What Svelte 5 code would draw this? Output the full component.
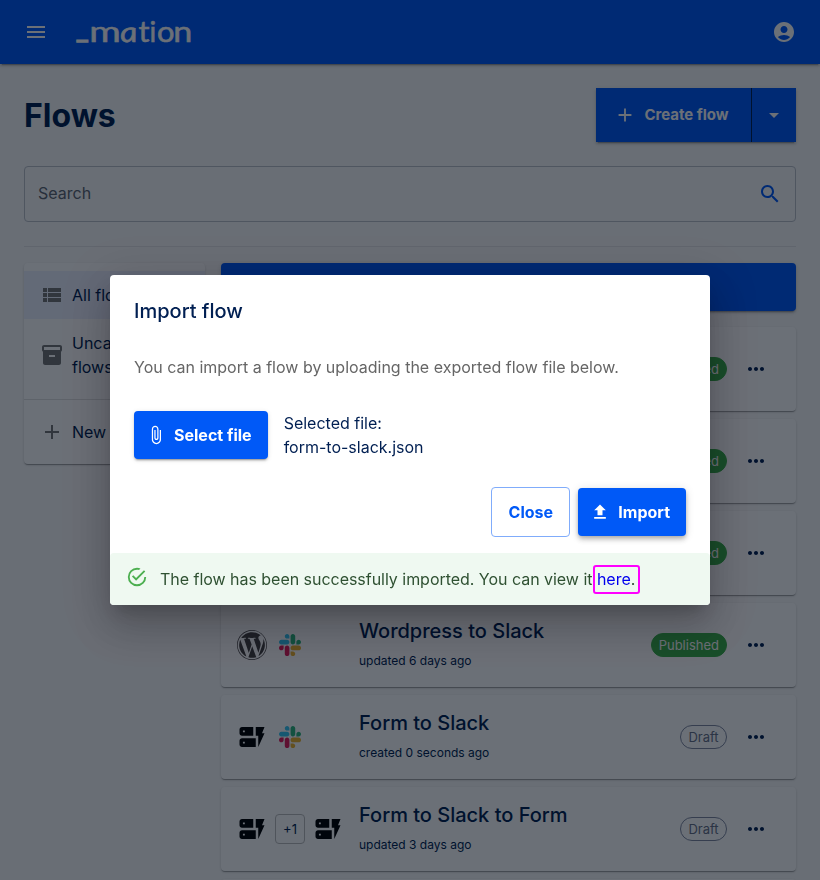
<script>
const icons = {
	menu: "M3 18h18v-2H3v2zm0-5h18v-2H3v2zm0-7v2h18V6H3z",
	account: "M12 2C6.48 2 2 6.48 2 12s4.48 10 10 10 10-4.48 10-10S17.52 2 12 2zm0 4c1.93 0 3.5 1.57 3.5 3.5S13.93 13 12 13s-3.5-1.57-3.5-3.5S10.07 6 12 6zm0 14c-2.03 0-4.43-.82-6.14-2.88C7.55 15.8 9.68 15 12 15s4.45.8 6.14 2.12C16.43 19.18 14.03 20 12 20z",
	add: "M19 13h-6v6h-2v-6H5v-2h6V5h2v6h6v2z",
	dropDown: "m7 10 5 5 5-5z",
	search: "M15.5 14h-.79l-.28-.27C15.41 12.59 16 11.11 16 9.5 16 5.91 13.09 3 9.5 3S3 5.91 3 9.5 5.91 16 9.5 16c1.61 0 3.09-.59 4.23-1.57l.27.28v.79l5 4.99L20.49 19l-4.99-5zm-6 0C7.01 14 5 11.99 5 9.5S7.01 5 9.5 5 14 7.01 14 9.5 11.99 14 9.5 14z",
	list: "M3 14h4v-4H3v4zm0 5h4v-4H3v4zM3 9h4V5H3v4zm5 5h13v-4H8v4zm0 5h13v-4H8v4zM8 5v4h13V5H8z",
	archive: "M20 2H4c-1 0-2 .9-2 2v3.01c0 .72.43 1.34 1 1.69V20c0 1.1 1.1 2 2 2h14c.9 0 2-.9 2-2V8.7c.57-.35 1-.97 1-1.69V4c0-1.1-1-2-2-2zm-5 12H9v-2h6v2zm5-7H4V4l16-.02V7z",
	more: "M6 10c-1.1 0-2 .9-2 2s.9 2 2 2 2-.9 2-2-.9-2-2-2zm12 0c-1.1 0-2 .9-2 2s.9 2 2 2 2-.9 2-2-.9-2-2-2zm-6 0c-1.1 0-2 .9-2 2s.9 2 2 2 2-.9 2-2-.9-2-2-2z",
	attach: "M16.5 6v11.5c0 2.21-1.79 4-4 4s-4-1.79-4-4V5c0-1.38 1.12-2.5 2.5-2.5s2.5 1.12 2.5 2.5v10.5c0 .55-.45 1-1 1s-1-.45-1-1V6H10v9.5c0 1.38 1.12 2.5 2.5 2.5s2.5-1.12 2.5-2.5V5c0-2.21-1.79-4-4-4S7 2.79 7 5v12.5c0 3.04 2.46 5.5 5.5 5.5s5.5-2.46 5.5-5.5V6h-1.5z",
	upload: "M5 20h14v-2H5v2zm0-10h4v6h6v-6h4l-7-7-7 7z",
	success: "M20,12A8,8 0 0,1 12,20A8,8 0 0,1 4,12A8,8 0 0,1 12,4C12.76,4 13.5,4.11 14.2, 4.31L15.77,2.74C14.61,2.26 13.34,2 12,2A10,10 0 0,0 2,12A10,10 0 0,0 12,22A10,10 0 0,0 22,12M7.91,10.08L6.5,11.5L11,16L21,6L19.59,4.58L11,13.17L7.91,10.08Z",
	form: "M17 20v-9h-2V4h7l-2 5h2l-5 11zm-2-7v7H4c-1.1 0-2-.9-2-2v-3c0-1.1.9-2 2-2h11zm-8.75 2.75h-1.5v1.5h1.5v-1.5zM13 4v7H4c-1.1 0-2-.9-2-2V6c0-1.1.9-2 2-2h9zM6.25 6.75h-1.5v1.5h1.5v-1.5z"
};

const flows = [
	{ apps: [], title: "", info: "", published: true },
	{ apps: [], title: "", info: "", published: true },
	{ apps: [], title: "", info: "", published: true },
	{ apps: ["wordpress", "slack"], title: "Wordpress to Slack", info: "updated 6 days ago", published: true },
	{ apps: ["form", "slack"], title: "Form to Slack", info: "created 0 seconds ago", published: false },
	{ apps: ["form", "+1", "form"], title: "Form to Slack to Form", info: "updated 3 days ago", published: false }
];

// letter, x, y and drawn width
const logo = [
	["_", 0, 21.5, 12.5],
	["m", 13.2, 26, 31.5],
	["a", 45, 26, 17.5],
	["t", 62.5, 26, 11],
	["i", 73.5, 26, 6.7],
	["o", 81, 26, 17.5],
	["n", 97.2, 26, 19]
];
</script>

{#snippet icon(name, size = 24)}
	<svg class="icon" width={size} height={size} viewBox="0 0 24 24"><path d={icons[name]} /></svg>
{/snippet}

{#snippet app(name)}
	{#if name === "wordpress"}
		<svg class="app wordpress" viewBox="0 0 122.52 122.523">
			<path d="M8.708 61.26c0 20.802 12.089 38.779 29.619 47.298L13.258 39.872a52.354 52.354 0 0 0-4.55 21.388z" />
			<path d="M96.74 58.608c0-6.495-2.333-10.993-4.334-14.494-2.664-4.329-5.161-7.995-5.161-12.324 0-4.831 3.664-9.328 8.825-9.328.233 0 .454.029.681.042-9.35-8.566-21.807-13.796-35.489-13.796-18.36 0-34.513 9.42-43.91 23.688 1.233.037 2.395.063 3.382.063 5.497 0 14.006-.667 14.006-.667 2.833-.167 3.167 3.994.337 4.329 0 0-2.847.335-6.015.501L48.2 93.547l11.501-34.493-8.188-22.434c-2.83-.166-5.511-.501-5.511-.501-2.832-.166-2.5-4.496.332-4.329 0 0 8.679.667 13.843.667 5.496 0 14.006-.667 14.006-.667 2.835-.167 3.168 3.994.337 4.329 0 0-2.853.335-6.015.501l18.992 56.494 5.242-17.517c2.272-7.269 4.001-12.49 4.001-16.989z" />
			<path d="M62.184 65.857l-15.768 45.819a52.552 52.552 0 0 0 14.846 2.141c6.12 0 11.989-1.058 17.452-2.979a4.615 4.615 0 0 1-.374-.724z" />
			<path d="M107.376 36.046c.226 1.674.354 3.471.354 5.404 0 5.333-.996 11.328-3.996 18.824l-16.053 46.413c15.624-9.111 26.133-26.038 26.133-45.426.001-9.137-2.333-17.729-6.438-25.215z" />
			<path d="M61.262 0C27.483 0 0 27.481 0 61.26c0 33.783 27.483 61.263 61.262 61.263 33.778 0 61.265-27.48 61.265-61.263C122.526 27.481 95.04 0 61.262 0zm0 119.715c-32.23 0-58.453-26.223-58.453-58.455 0-32.23 26.222-58.451 58.453-58.451 32.229 0 58.45 26.221 58.45 58.451 0 32.232-26.221 58.455-58.45 58.455z" />
		</svg>
	{:else if name === "slack"}
		<svg class="app slack" viewBox="0 0 122.8 122.8">
			<path fill="#e01e5a" d="M25.8 77.6c0 7.1-5.8 12.9-12.9 12.9S0 84.7 0 77.6s5.8-12.9 12.9-12.9h12.9v12.9zm6.5 0c0-7.1 5.8-12.9 12.9-12.9s12.9 5.8 12.9 12.9v32.3c0 7.1-5.8 12.9-12.9 12.9s-12.9-5.8-12.9-12.9V77.6z" />
			<path fill="#36c5f0" d="M45.2 25.8c-7.1 0-12.9-5.8-12.9-12.9S38.1 0 45.2 0s12.9 5.8 12.9 12.9v12.9H45.2zm0 6.5c7.1 0 12.9 5.8 12.9 12.9s-5.8 12.9-12.9 12.9H12.9C5.8 58.1 0 52.3 0 45.2s5.8-12.9 12.9-12.9h32.3z" />
			<path fill="#2eb67d" d="M97 45.2c0-7.1 5.8-12.9 12.9-12.9s12.9 5.8 12.9 12.9-5.8 12.9-12.9 12.9H97V45.2zm-6.5 0c0 7.1-5.8 12.9-12.9 12.9s-12.9-5.8-12.9-12.9V12.9C64.7 5.8 70.5 0 77.6 0s12.9 5.8 12.9 12.9v32.3z" />
			<path fill="#ecb22e" d="M77.6 97c7.1 0 12.9 5.8 12.9 12.9s-5.8 12.9-12.9 12.9-12.9-5.8-12.9-12.9V97h12.9zm0-6.5c-7.1 0-12.9-5.8-12.9-12.9s5.8-12.9 12.9-12.9h32.3c7.1 0 12.9 5.8 12.9 12.9s-5.8 12.9-12.9 12.9H77.6z" />
		</svg>
	{:else if name === "form"}
		<span class="app">{@render icon("form", 30)}</span>
	{:else}
		<span class="app count">{name}</span>
	{/if}
{/snippet}

<div class="page">
	<header>
		{@render icon("menu")}
		<svg class="logo" width="118" height="32" viewBox="0 0 118 32">
			{#each logo as [letter, x, y, width]}
				<text
					class:bar={letter === "_"}
					class:round={letter === "a"}
					transform="translate({x} {y}) skewX({letter === 'a' ? 8 : 0})"
					textLength={width}
					lengthAdjust="spacingAndGlyphs">{letter}</text>
			{/each}
		</svg>
		{@render icon("account")}
	</header>

	<main>
		<div class="heading">
			<h1>Flows</h1>
			<div class="group">
				<button class="create">{@render icon("add", 22)}Create flow</button>
				<button class="split" aria-label="More">{@render icon("dropDown")}</button>
			</div>
		</div>

		<div class="search">
			<span>Search</span>
			{@render icon("search")}
		</div>

		<hr />

		<div class="columns">
			<nav>
				<ul>
					<li class="selected">{@render icon("list")}<span>All flows</span></li>
					<li>{@render icon("archive")}<span>Uncategorized flows</span></li>
				</ul>
				<ul>
					<li>{@render icon("add")}<span>New folder</span></li>
				</ul>
			</nav>

			<section>
				<div class="banner"></div>
				{#each flows as flow}
					<article>
						<div class="apps">
							{#each flow.apps as name}
								{@render app(name)}
							{/each}
						</div>
						<div class="info">
							<h2>{flow.title}</h2>
							<p>{flow.info}</p>
						</div>
						<span class="chip" class:published={flow.published}>{flow.published ? "Published" : "Draft"}</span>
						<span class="more">{@render icon("more")}</span>
					</article>
				{/each}
				<article></article>
			</section>
		</div>
	</main>
</div>

<div class="backdrop">
	<div class="dialog" role="dialog">
		<h3>Import flow</h3>
		<div class="content">
			<p>You can import a flow by uploading the exported flow file below.</p>
			<div class="file">
				<button class="contained">{@render icon("attach", 20)}Select file</button>
				<div>Selected file:<br />form-to-slack.json</div>
			</div>
		</div>
		<div class="actions">
			<button class="outlined">Close</button>
			<button class="contained raised">{@render icon("upload", 20)}Import</button>
		</div>
		<div class="alert">
			{@render icon("success", 22)}
			<div>The flow has been successfully imported. You can view it <span class="link"><a href="#flow">here</a>.</span></div>
		</div>
	</div>
</div>

<style>
	:global(body) {
		margin: 0;
		overflow: hidden;
		background: #fafafa;
	}

	.page, .backdrop {
		font: 400 16px/24px Inter, "Liberation Sans", sans-serif;
		color: #001f52;
	}

	.page {
		height: 880px;
		overflow: hidden;
	}

	h1, h2, h3, p, ul {
		margin: 0;
		padding: 0;
	}

	.icon {
		display: block;
		flex: none;
		fill: currentColor;
	}

	button {
		display: flex;
		align-items: center;
		justify-content: center;
		box-sizing: border-box;
		border: 0;
		font: 700 16px/28px Inter, "Liberation Sans", sans-serif;
		color: #fff;
		background: #0059f7;
	}

	header {
		display: flex;
		align-items: center;
		height: 64px;
		box-sizing: border-box;
		padding: 0 24px;
		color: #fff;
		background: #0059f7;
		box-shadow: 0 3px 1px -2px rgba(0,0,0,0.2), 0 2px 2px rgba(0,0,0,0.14), 0 1px 5px rgba(0,0,0,0.12);
	}

	.logo {
		overflow: visible;
		margin: 0 auto 0 28px;
		fill: #fff;
		stroke: #fff;
		stroke-width: 0.5px;
		font: 400 28px Lato, sans-serif;
	}

	.logo .bar {
		stroke-width: 1.5px;
	}

	.logo .round {
		font-style: italic;
	}

	main {
		padding: 24px;
	}

	.heading {
		display: flex;
		justify-content: space-between;
		align-items: center;
		height: 54px;
		margin-bottom: 24px;
	}

	h1 {
		padding-top: 2px;
		font-size: 32px;
		line-height: 40px;
		font-weight: 700;
	}

	.group {
		display: flex;
		height: 54px;
		box-shadow: 0 3px 1px -2px rgba(0,0,0,0.2), 0 2px 2px rgba(0,0,0,0.14), 0 1px 5px rgba(0,0,0,0.12);
	}

	.create {
		width: 156px;
		gap: 8px;
		padding: 0 22px 0 18px;
		border-right: 1px solid #001f52;
		font-size: 15px;
		white-space: nowrap;
	}

	.split {
		width: 44px;
		padding: 0;
	}

	.search {
		display: flex;
		justify-content: space-between;
		align-items: center;
		height: 56px;
		box-sizing: border-box;
		padding: 0 13px;
		border: 1px solid #bcc0c9;
		border-radius: 4px;
	}

	.search span {
		padding-bottom: 2px;
		color: #5f6672;
	}

	.search .icon {
		color: #0059f7;
	}

	hr {
		height: 1px;
		margin: 24px 0 16px;
		border: 0;
		background: #e4e4e6;
	}

	.columns {
		display: grid;
		grid-template-columns: 181px 575px;
		gap: 16px;
		align-items: start;
	}

	nav, article {
		border-radius: 4px;
		background: #fff;
		box-shadow: 0 2px 1px -1px rgba(0,0,0,0.2), 0 1px 1px rgba(0,0,0,0.14), 0 1px 3px rgba(0,0,0,0.12);
	}

	ul {
		padding: 8px 0;
		list-style: none;
	}

	ul + ul {
		border-top: 1px solid #e0e0e0;
	}

	li {
		display: flex;
		align-items: center;
		gap: 8px;
		padding: 12px 16px;
		white-space: nowrap;
	}

	li:nth-child(2) {
		white-space: normal;
	}

	li .icon {
		color: #757575;
	}

	.selected {
		background: #ebf0ff;
	}

	.banner {
		height: 48px;
		margin-bottom: 16px;
		border-radius: 4px;
		background: #0059f7;
		box-shadow: 0 3px 1px -2px rgba(0,0,0,0.2), 0 2px 2px rgba(0,0,0,0.14), 0 1px 5px rgba(0,0,0,0.12);
	}

	article {
		display: flex;
		align-items: center;
		height: 84px;
		margin-bottom: 8px;
		padding: 0 16px;
		box-sizing: border-box;
	}

	.apps {
		display: flex;
		gap: 8px;
		width: 122px;
		color: #000;
	}

	.app {
		width: 30px;
		height: 30px;
		box-sizing: border-box;
	}

	.wordpress {
		fill: #464342;
	}

	.slack {
		padding: 4px;
	}

	.count {
		border: 1px solid #bdbdbd;
		border-radius: 4px;
		font-size: 13px;
		line-height: 28px;
		text-align: center;
		color: #001f52;
	}

	.info {
		flex: 1;
		padding-bottom: 4px;
	}

	h2 {
		height: 32px;
		font-size: 20px;
		line-height: 32px;
		font-weight: 500;
	}

	.info p {
		height: 20px;
		margin: 4px 0 0;
		font-size: 12px;
		line-height: 20px;
	}

	.chip {
		height: 24px;
		box-sizing: border-box;
		padding: 0 7.4px;
		border: 1px solid #8088a0;
		border-radius: 12px;
		font-size: 13px;
		line-height: 22px;
		color: #687188;
	}

	.published {
		padding: 0 7px;
		border-color: #3bb04a;
		color: #fff;
		background: #3bb04a;
	}

	.more {
		margin: 0 12px 0 17px;
	}

	.backdrop {
		position: fixed;
		inset: 0;
		display: flex;
		align-items: center;
		justify-content: center;
		background: rgba(0,8,20,0.58);
	}

	.dialog {
		width: 600px;
		border-radius: 4px;
		background: #fff;
		box-shadow: 0 11px 15px -7px rgba(0,0,0,0.2), 0 24px 38px 3px rgba(0,0,0,0.14), 0 9px 46px 8px rgba(0,0,0,0.12);
	}

	h3 {
		padding: 20px 24px;
		font-size: 20px;
		line-height: 32px;
		font-weight: 500;
	}

	.content {
		padding: 8px 24px 20px;
	}

	.content p {
		margin-bottom: 32px;
		color: #666;
	}

	.file {
		display: flex;
		align-items: center;
		gap: 16px;
	}

	.contained {
		height: 48px;
		gap: 8px;
		padding: 0 16px 0 12px;
		border-radius: 4px;
		box-shadow: 0 3px 1px -2px rgba(0,0,0,0.2), 0 2px 2px rgba(0,0,0,0.14), 0 1px 5px rgba(0,0,0,0.12);
	}

	.raised {
		box-shadow: 0 2px 4px -1px rgba(0,0,0,0.2), 0 4px 5px rgba(0,0,0,0.14), 0 1px 10px rgba(0,0,0,0.12);
	}

	.actions {
		display: flex;
		align-items: center;
		justify-content: flex-end;
		gap: 8px;
		padding: 8px 24px 16px;
	}

	.outlined {
		width: 79px;
		height: 50px;
		padding: 0;
		border: 1px solid #80acfb;
		border-radius: 4px;
		color: #0059f7;
		background: #fff;
	}

	.alert {
		display: flex;
		gap: 12px;
		padding: 13px 16px;
		border-radius: 4px;
		color: #2f5132;
		background: #eff9f1;
	}

	.alert > div {
		line-height: 26px;
		letter-spacing: -0.03px;
	}

	.alert .icon {
		color: #4caf50;
	}

	.link {
		position: relative;
	}

	.link a {
		color: #00e;
		text-decoration: none;
	}

	/* highlight ring around the link */
	.link::after {
		content: "";
		position: absolute;
		inset: -4px -5px -5px -4px;
		border: 2px solid #f0f;
		border-radius: 3px;
	}
</style>
